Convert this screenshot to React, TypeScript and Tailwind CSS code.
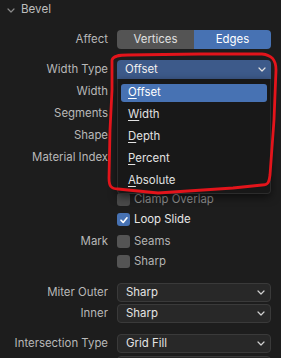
import React from 'react';

const Chevron = ({ color = '#d0d0d0' }: { color?: string }) => (
  <svg width="8" height="5" viewBox="0 0 8 5" className="shrink-0">
    <path d="M1 1 L4 4 L7 1" fill="none" stroke={color} strokeWidth="1.2" strokeLinecap="round" strokeLinejoin="round" />
  </svg>
);

const Row = ({ label, className = '', children }: { label?: string; className?: string; children?: React.ReactNode }) => (
  <div className={`flex items-center h-[19px] ${className}`}>
    <div className="w-[108px] text-right text-[#b8b8b8] whitespace-nowrap">{label}</div>
    <div className="ml-[9px] w-[154px] h-full relative">{children}</div>
  </div>
);

const Select = ({ value }: { value: string }) => (
  <div className="h-full flex items-center justify-between pl-[8px] pr-[5px] rounded-[4px] bg-[#282828] border border-[#3a3a3a] text-[#e4e4e4]">
    <span>{value}</span>
    <Chevron />
  </div>
);

const Check = ({ label, checked = false, dim = false }: { label: string; checked?: boolean; dim?: boolean }) => (
  <div className="h-full flex items-center gap-[4px]">
    <div className={`w-[13px] h-[13px] rounded-[3px] flex items-center justify-center ${checked ? 'bg-[#4772b3]' : dim ? 'bg-[#4a4a4a]' : 'bg-[#545454]'}`}>
      {checked && (
        <svg width="10" height="10" viewBox="0 0 10 10">
          <path d="M2 5.2 L4.2 7.4 L8 2.8" fill="none" stroke="#fff" strokeWidth="1.6" strokeLinecap="round" strokeLinejoin="round" />
        </svg>
      )}
    </div>
    <span className={dim ? 'text-[#8c8c8c]' : checked ? 'text-[#e6e6e6]' : 'text-[#b4b4b4]'}>{label}</span>
  </div>
);

const menuItems = ['Offset', 'Width', 'Depth', 'Percent', 'Absolute'];

const App = () => {
  return (
    <div className="relative w-[281px] h-[358px] overflow-hidden bg-[#1d1d1d] text-[11.4px] leading-none font-['Inter','Noto_Sans',sans-serif]">
      <div className="h-[20px] flex items-center pl-[7px] gap-[6px] text-[#bdbdbd]">
        <Chevron color="#8a8a8a" />
        <span className="text-[11.6px]">Bevel</span>
      </div>

      <Row label="Affect" className="mt-[10px]">
        <div className="h-full flex">
          <div className="flex-1 flex items-center justify-center bg-[#545454] text-[#e0e0e0] rounded-l-[4px]">Vertices</div>
          <div className="flex-1 flex items-center justify-center bg-[#4772b3] text-white rounded-r-[4px]">Edges</div>
        </div>
      </Row>

      <Row label="Width Type" className="mt-[11px] relative z-10">
        <div className="h-full flex items-center justify-between pl-[8px] pr-[5px] rounded-t-[4px] bg-[#3d5a8a] text-[#f0f0f0]">
          <span>Offset</span>
          <Chevron color="#e0e0e0" />
        </div>
        <div className="absolute left-0 top-full w-full h-[115px] bg-[#181818] border border-[#2c2c2c] border-t-0 rounded-b-[4px] pt-[3px] px-[3px] shadow-[0_3px_8px_rgba(0,0,0,0.55)]">
          {menuItems.map((m, i) => (
            <div key={m} className="h-[22px] py-[2px]">
              <div className={`h-full flex items-center pl-[7px] rounded-[3px] ${i === 0 ? 'bg-[#4772b3] text-white' : 'text-[#e2e2e2]'}`}>
                <span className="underline underline-offset-[2px] decoration-[1px]">{m[0]}</span>
                <span>{m.slice(1)}</span>
              </div>
            </div>
          ))}
        </div>
      </Row>

      <Row label="Width" className="mt-[3px]" />
      <Row label="Segments" className="mt-[3px]" />
      <Row label="Shape" className="mt-[3px]" />
      <Row label="Material Index" className="mt-[3px]" />

      <Row className="mt-[23px]">
        <Check label="Clamp Overlap" dim />
      </Row>
      <Row className="mt-[1px]">
        <Check label="Loop Slide" checked />
      </Row>
      <Row label="Mark" className="mt-[3px]">
        <Check label="Seams" />
      </Row>
      <Row className="mt-[1px]">
        <Check label="Sharp" />
      </Row>

      <Row label="Miter Outer" className="mt-[12px]">
        <Select value="Sharp" />
      </Row>
      <Row label="Inner" className="mt-[2px]">
        <Select value="Sharp" />
      </Row>
      <Row label="Intersection Type" className="mt-[11px]">
        <Select value="Grid Fill" />
      </Row>
      <Row className="mt-[3px]">
        <Select value="" />
      </Row>

      <svg className="absolute inset-0 pointer-events-none z-20" width="281" height="358" viewBox="0 0 281 358">
        <path
          d="M112 60 C113 56 118 55 128 55 L200 54 L262 54 C272 55 276 60 276 70 L274 120 L270 175 C269 183 268 185 262 185 L233 188 L158 193 L118 189 C111 189 109 186 109 178 L110 130 L112 90 Z"
          fill="none"
          stroke="#e3141b"
          strokeWidth="2.8"
          strokeLinejoin="round"
          strokeLinecap="round"
        />
      </svg>
    </div>
  );
};

export default App;
